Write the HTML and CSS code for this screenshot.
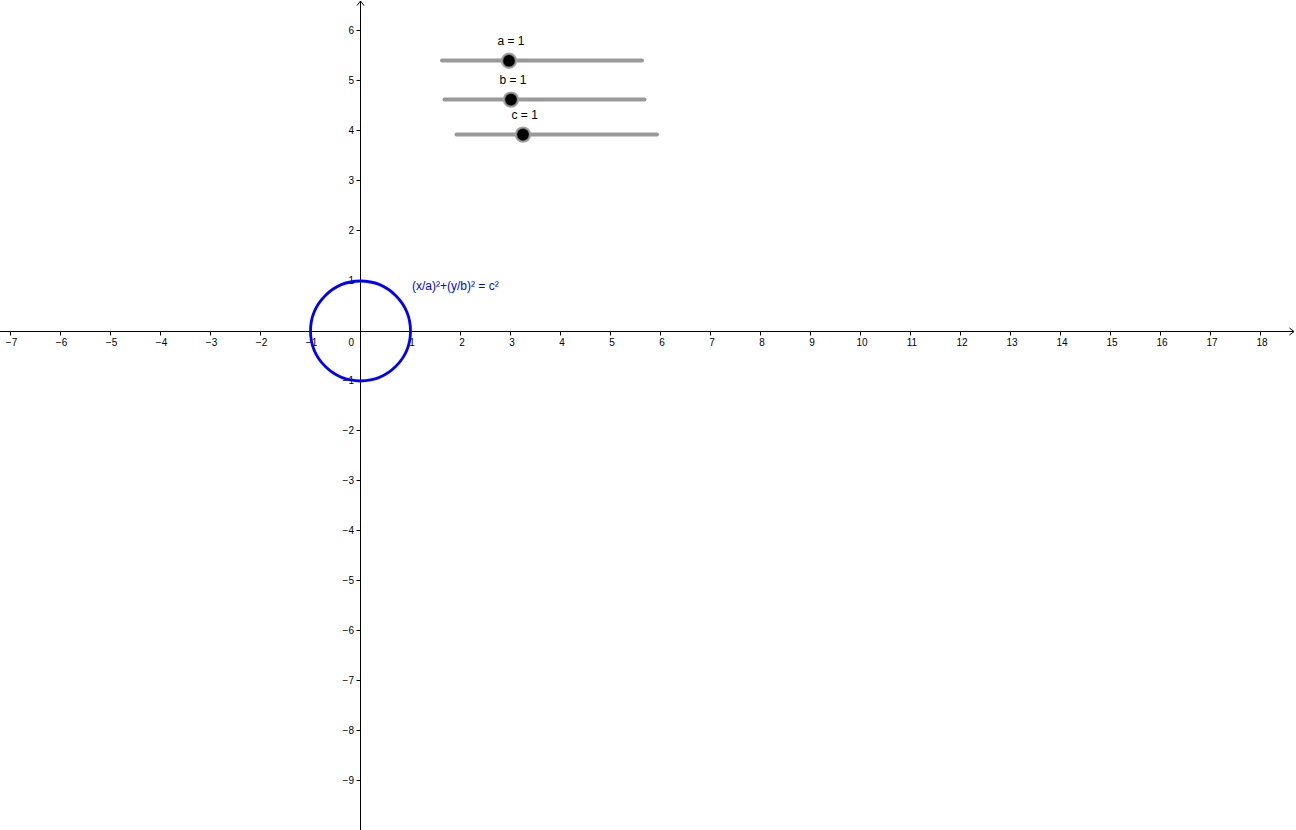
FILE: index.html
```
<!DOCTYPE html>
<html>
<head>
<meta charset="utf-8">
<link rel="stylesheet" href="styles.css">
</head>
<body>
<div class="view">
<svg class="graph" width="1296" height="830" viewBox="0 0 1296 830" xmlns="http://www.w3.org/2000/svg">
  <!-- axes -->
  <path class="axis" d="M0 331.5H1293.5 M360.5 1V830"/>
  <path class="axis" d="M1289.5 328L1294 331.5L1289.5 335 M357 5.5L360.5 1L364 5.5"/>
  <!-- ticks -->
  <path class="axis" d="M10.5 331.5V335.5 M60.5 331.5V335.5 M110.5 331.5V335.5 M160.5 331.5V335.5 M210.5 331.5V335.5 M260.5 331.5V335.5 M310.5 331.5V335.5 M410.5 331.5V335.5 M460.5 331.5V335.5 M510.5 331.5V335.5 M560.5 331.5V335.5 M610.5 331.5V335.5 M660.5 331.5V335.5 M710.5 331.5V335.5 M760.5 331.5V335.5 M810.5 331.5V335.5 M860.5 331.5V335.5 M910.5 331.5V335.5 M960.5 331.5V335.5 M1010.5 331.5V335.5 M1060.5 331.5V335.5 M1110.5 331.5V335.5 M1160.5 331.5V335.5 M1210.5 331.5V335.5 M1260.5 331.5V335.5"/>
  <path class="axis" d="M356.5 30.5H360.5 M356.5 80.5H360.5 M356.5 130.5H360.5 M356.5 180.5H360.5 M356.5 230.5H360.5 M356.5 280.5H360.5 M356.5 380.5H360.5 M356.5 430.5H360.5 M356.5 480.5H360.5 M356.5 530.5H360.5 M356.5 580.5H360.5 M356.5 630.5H360.5 M356.5 680.5H360.5 M356.5 730.5H360.5 M356.5 780.5H360.5"/>

  <!-- x labels -->
  <g class="xl">
    <text x="11.5" y="345.5">−7</text>
    <text x="61.5" y="345.5">−6</text>
    <text x="111.5" y="345.5">−5</text>
    <text x="161.5" y="345.5">−4</text>
    <text x="211.5" y="345.5">−3</text>
    <text x="261.5" y="345.5">−2</text>
    <text x="311.5" y="345.5">−1</text>
    <text x="412" y="345.5">1</text>
    <text x="462" y="345.5">2</text>
    <text x="512" y="345.5">3</text>
    <text x="562" y="345.5">4</text>
    <text x="612" y="345.5">5</text>
    <text x="662" y="345.5">6</text>
    <text x="712" y="345.5">7</text>
    <text x="762" y="345.5">8</text>
    <text x="812" y="345.5">9</text>
    <text x="862" y="345.5">10</text>
    <text x="912" y="345.5">11</text>
    <text x="962" y="345.5">12</text>
    <text x="1012" y="345.5">13</text>
    <text x="1062" y="345.5">14</text>
    <text x="1112" y="345.5">15</text>
    <text x="1162" y="345.5">16</text>
    <text x="1212" y="345.5">17</text>
    <text x="1262" y="345.5">18</text>
  </g>
  <!-- y labels -->
  <g class="yl">
    <text x="354" y="34.2">6</text>
    <text x="354" y="84.2">5</text>
    <text x="354" y="134.2">4</text>
    <text x="354" y="184.2">3</text>
    <text x="354" y="234.2">2</text>
    <text x="354" y="284.2">1</text>
    <text x="354" y="345.5">0</text>
    <text x="354" y="384.2">−1</text>
    <text x="354" y="434.2">−2</text>
    <text x="354" y="484.2">−3</text>
    <text x="354" y="534.2">−4</text>
    <text x="354" y="584.2">−5</text>
    <text x="354" y="634.2">−6</text>
    <text x="354" y="684.2">−7</text>
    <text x="354" y="734.2">−8</text>
    <text x="354" y="784.2">−9</text>
  </g>

  <!-- curve -->
  <circle class="curve" cx="360.5" cy="331" r="50"/>
  <text class="eq" x="412" y="289.5">(x/a)²+(y/b)² = c²</text>

  <!-- sliders -->
  <g class="slider">
    <text class="slabel" x="497.5" y="44.8">a = 1</text>
    <line class="track" x1="442" y1="60.5" x2="642" y2="60.5"/>
    <circle class="ring" cx="509" cy="60.8" r="7.5"/>
    <circle class="knob" cx="509" cy="60.8" r="5.8"/>
  </g>
  <g class="slider">
    <text class="slabel" x="499.5" y="84">b = 1</text>
    <line class="track" x1="444.5" y1="99.5" x2="644.5" y2="99.5"/>
    <circle class="ring" cx="511" cy="99.6" r="7.5"/>
    <circle class="knob" cx="511" cy="99.6" r="5.8"/>
  </g>
  <g class="slider">
    <text class="slabel" x="511.5" y="119">c = 1</text>
    <line class="track" x1="456.5" y1="134.5" x2="657" y2="134.5"/>
    <circle class="ring" cx="523" cy="134.6" r="7.5"/>
    <circle class="knob" cx="523" cy="134.6" r="5.8"/>
  </g>
</svg>
</div>
</body>
</html>
```
FILE: styles.css
```
html, body {
  margin: 0;
  padding: 0;
  background: #ffffff;
  overflow: hidden;
}
.view {
  width: 1296px;
  height: 830px;
  overflow: hidden;
}
.graph {
  display: block;
  font-family: "Liberation Sans", Arial, sans-serif;
}
.axis {
  fill: none;
  stroke: #000000;
  stroke-width: 1;
}
.xl text {
  font-size: 10px;
  text-anchor: middle;
  fill: #000000;
}
.yl text {
  font-size: 10px;
  text-anchor: end;
  fill: #000000;
}
.curve {
  fill: none;
  stroke: #0000ff;
  stroke-width: 2.8;
}
.eq {
  font-size: 12px;
  fill: #0000ff;
}
.slabel {
  font-size: 12px;
  fill: #000000;
}
.track {
  stroke: #999999;
  stroke-width: 4;
  stroke-linecap: round;
}
.ring {
  fill: #7a7a7a;
  stroke: #a6a6a6;
  stroke-width: 1.4;
}
.knob {
  fill: #000000;
}
```
